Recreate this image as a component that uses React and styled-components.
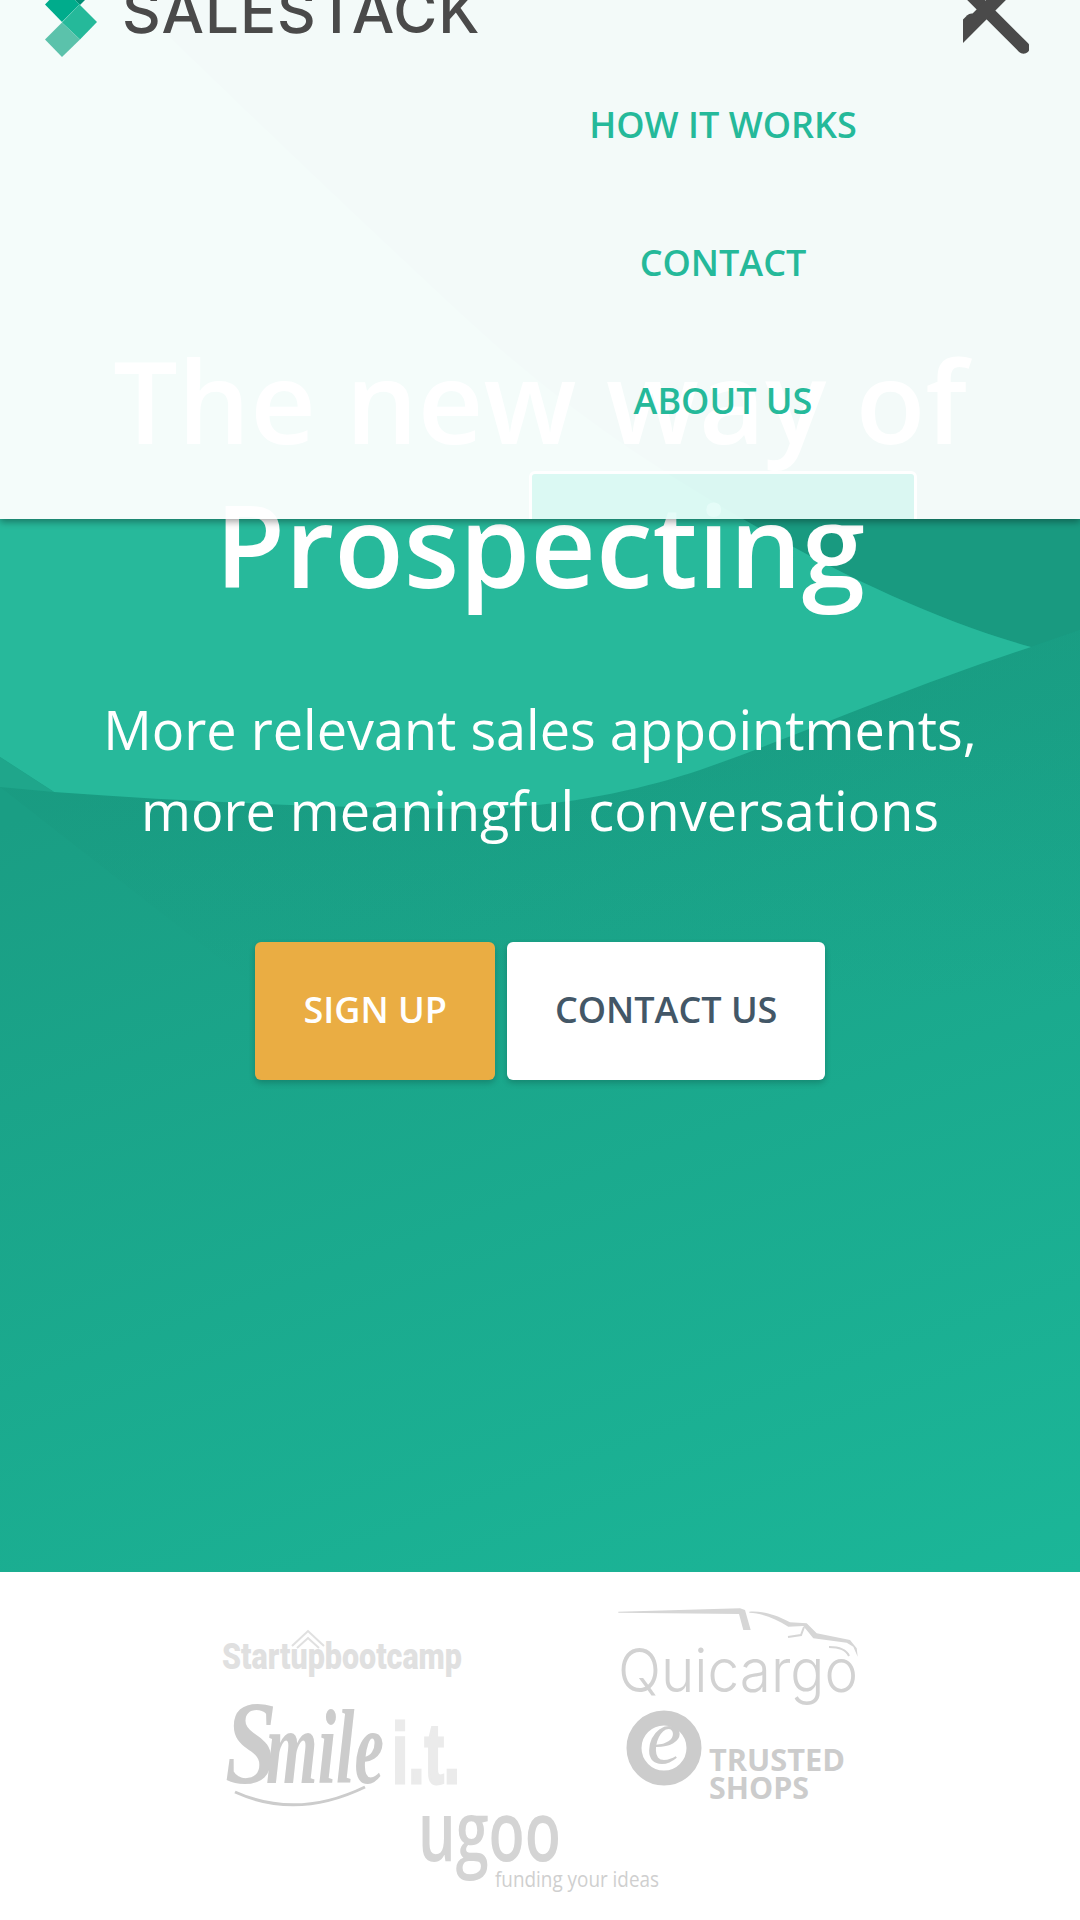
import React from 'react';
import styled, { createGlobalStyle } from 'styled-components';

const Global = createGlobalStyle`
  html, body { margin: 0; padding: 0; background: #fff; }
  body { font-family: "Open Sans", "Liberation Sans", sans-serif; width: 1080px; height: 1920px; overflow: hidden; }
`;

const Page = styled.div`
  position: relative;
  width: 1080px;
  height: 1920px;
  overflow: hidden;
`;

const Menu = styled.header`
  position: absolute;
  top: 0;
  left: 0;
  z-index: 5;
  width: 1080px;
  height: 519px;
  overflow: hidden;
  background: rgba(255, 255, 255, 0.95);
  box-shadow: 0 3px 7px rgba(0, 0, 0, 0.35);
`;

const TopBar = styled.div`
  display: flex;
  justify-content: space-between;
  height: 56px;
  padding: 0 51px 0 45px;
`;

const Brand = styled.div`
  display: flex;
  align-items: flex-start;
  gap: 25px;
`;

const BrandMark = styled.svg`
  display: block;
  width: 52px;
  height: 57px;
  overflow: visible;
  flex: none;
`;

const BrandName = styled.span`
  font-family: Inter, "Liberation Sans", sans-serif;
  font-size: 60px;
  font-weight: 500;
  line-height: 60px;
  letter-spacing: 1px;
  color: #4a4a4a;
  margin-top: -19px;
  white-space: nowrap;
`;

const CloseIcon = styled.svg`
  display: block;
  width: 66px;
  height: 55px;
  overflow: hidden;
  flex: none;
`;

const Nav = styled.nav`
  display: flex;
  flex-direction: column;
  width: 388px;
  margin-left: 529px;
`;

const NavLink = styled.a`
  display: block;
  height: 138px;
  font-size: 36px;
  font-weight: 600;
  line-height: 138px;
  color: #25b99a;
  text-align: center;
  white-space: nowrap;
`;

const NavButton = styled.div`
  box-sizing: border-box;
  height: 138px;
  margin-top: 1px;
  border: 3px solid #fff;
  border-radius: 6px;
  background: rgba(0, 230, 190, 0.1);
`;

const Hero = styled.section`
  position: relative;
  height: 1572px;
  overflow: hidden;
  background: linear-gradient(160deg, #1a9e84 42%, #1bb698 100%);
`;

const Waves = styled.svg`
  position: absolute;
  top: 0;
  left: 0;
  width: 1080px;
  height: 1572px;
`;

const HeroBody = styled.div`
  position: relative;
  display: flex;
  flex-direction: column;
  align-items: center;
  padding-top: 328px;
  color: #fff;
  text-align: center;
`;

const Title = styled.h1`
  margin: 0;
  font-size: 114px;
  font-weight: 600;
  line-height: 144px;
  white-space: nowrap;
`;

const Sub = styled.p`
  margin: 73px 0 0;
  font-size: 54px;
  font-weight: 400;
  line-height: 81px;
  white-space: nowrap;
`;

const Actions = styled.div`
  display: flex;
  gap: 12px;
  margin-top: 91px;
`;

const Action = styled.a`
  display: block;
  height: 138px;
  padding: 0 ${p => p.$pad}px;
  border-radius: 6px;
  background: ${p => p.$bg};
  color: ${p => p.$fg};
  font-size: 36px;
  font-weight: 600;
  line-height: 136px;
  box-shadow: 0 3px 6px rgba(0, 0, 0, 0.2);
  white-space: nowrap;
`;

const Partners = styled.section`
  display: grid;
  grid-template-columns: 240px 240px;
  grid-auto-rows: max-content;
  justify-content: center;
  column-gap: 156px;
  height: 348px;
  padding-top: 33px;
  box-sizing: border-box;
  background: #fff;
`;

const PartnerLogo = styled.svg`
  display: block;
  width: 240px;
  height: 100px;
  overflow: visible;
  font-family: "Open Sans", sans-serif;
`;

const Ugoo = styled(PartnerLogo)`
  grid-column: 1 / -1;
  justify-self: center;
  height: 80px;
  margin-top: 5px;
`;

export default function App() {
  return (
    <Page>
      <Global />
      <Hero>
        <Waves viewBox="0 0 1080 1572">
          <defs>
            <linearGradient id="band" x1="0" y1="700" x2="0" y2="1000" gradientUnits="userSpaceOnUse">
              <stop offset="0" stopColor="#158a72" stopOpacity="0.18" />
              <stop offset="1" stopColor="#158a72" stopOpacity="0" />
            </linearGradient>
          </defs>
          <path d="M0 787 L54 792 C200 800 400 806 482 803 C520 803 550 803 585 798 C680 780 800 720 1031 647 L1080 630 L1080 1000 L260 990 Z" fill="url(#band)" />
          <path d="M743 519 C840 575 940 622 1031 647 L1080 630 L1080 0 L130 0 L468 320 Z" fill="#199a80" />
          <path d="M0 0 L130 0 C170 35 258 125 468 320 C560 405 650 465 743 519 C840 575 940 622 1031 647 C900 690 800 735 700 770 C640 790 560 808 470 809 C350 808 200 803 54 792 L0 757 Z" fill="#27b99b" />
          <path d="M0 757 L54 792 L0 787 Z" fill="#1fa68b" />
        </Waves>
        <HeroBody>
          <Title>The new way of<br />Prospecting</Title>
          <Sub>More relevant sales appointments,<br />more meaningful conversations</Sub>
          <Actions>
            <Action $bg="#eaad43" $fg="#fff" $pad={48.5}>SIGN UP</Action>
            <Action $bg="#fff" $fg="#435767" $pad={47.5}>CONTACT US</Action>
          </Actions>
        </HeroBody>
      </Hero>

      <Menu>
        <TopBar>
          <Brand>
            <BrandMark viewBox="45 0 52 57">
              <polygon points="75,0 85,0 80,5" fill="#008d74" />
              <polygon points="45,4.5 62,-13 79.5,4.5 62,22" fill="#00ac8c" />
              <polygon points="62,22.5 79.5,4.5 97,22 80,39.5" fill="#25b99a" />
              <polygon points="45,39.5 62,22.5 80,39.5 62,57" fill="#5bc2ab" />
            </BrandMark>
            <BrandName>SALESTACK</BrandName>
          </Brand>
          <CloseIcon viewBox="0 0 66 55">
            <g stroke="#4a4a4a" fill="none" strokeLinecap="round">
              <line x1="-2" y1="-15" x2="60.5" y2="47.5" strokeWidth="12.5" />
              <line x1="-10" y1="43" x2="45" y2="-12" strokeWidth="14" />
              <line x1="-5" y1="33" x2="8.5" y2="19.5" strokeWidth="12" />
            </g>
          </CloseIcon>
        </TopBar>
        <Nav>
          <NavLink>HOW IT WORKS</NavLink>
          <NavLink>CONTACT</NavLink>
          <NavLink>ABOUT US</NavLink>
          <NavButton />
        </Nav>
      </Menu>

      <Partners>
        <PartnerLogo viewBox="222 1605 240 100">
          <text x="222" y="1669" fontFamily="Roboto, sans-serif" fontWeight="900" fontSize="37" fill="#e0e0e0" textLength="240" lengthAdjust="spacingAndGlyphs">Startupbootcamp</text>
          <path d="M292 1646 L308 1631 L324 1646 M297 1648 L308 1638 L319 1648" fill="none" stroke="#e0e0e0" strokeWidth="2" />
        </PartnerLogo>
        <PartnerLogo viewBox="618 1605 240 100">
          <path d="M618.3 1611.7 L740 1608.3 L745 1610 L750.7 1630 L743.3 1630 L739 1614 L618.3 1612.7 Z" fill="#d6d6d6" />
          <path d="M749.3 1611.7 C760 1611 773 1613 790 1622.3 L806.7 1623.3 L816.7 1633.3 L850 1640 L856.7 1648.3 L857.7 1656.7 L853.3 1646.7 L846.7 1642.7 L813.3 1638.3 L803.3 1626 L788.3 1626.7 C775 1618 762 1613.5 749.3 1612.7 Z" fill="#d6d6d6" />
          <path d="M788 1637 L801 1635 L804 1627 M829 1647 C838 1647 846 1649 849 1656" fill="none" stroke="#d6d6d6" strokeWidth="2" />
          <text x="618" y="1692" fontFamily="Inter, sans-serif" fontWeight="300" fontSize="60" fill="#d2d2d2" textLength="240" lengthAdjust="spacingAndGlyphs">Quicargo</text>
        </PartnerLogo>
        <PartnerLogo viewBox="222 1705 240 100">
          <text x="225" y="1783" fontFamily="'Liberation Serif', serif" fontStyle="italic" fontWeight="700" fontSize="118" fill="#cccccc" textLength="52" lengthAdjust="spacingAndGlyphs">S</text>
          <text x="266" y="1783" fontFamily="'Liberation Serif', serif" fontStyle="italic" fontWeight="700" fontSize="105" fill="#cccccc" textLength="118" lengthAdjust="spacingAndGlyphs">mile</text>
          <text x="392" y="1783" fontFamily="'Liberation Sans', sans-serif" fontWeight="700" fontSize="86" fill="#ebebeb" stroke="#ebebeb" strokeWidth="3" textLength="68" lengthAdjust="spacingAndGlyphs">i.t.</text>
          <path d="M235 1792 Q297 1820 365 1787" fill="none" stroke="#cccccc" strokeWidth="3" />
        </PartnerLogo>
        <PartnerLogo viewBox="618 1705 240 100">
          <circle cx="664" cy="1748" r="30" fill="none" stroke="#cccccc" strokeWidth="15" />
          <text x="664" y="1763" textAnchor="middle" fontFamily="'Liberation Serif', serif" fontStyle="italic" fontSize="78" fill="#cccccc">e</text>
          <text x="709" y="1771" fontWeight="700" fontSize="30" fill="#cccccc" textLength="136" lengthAdjust="spacingAndGlyphs">TRUSTED</text>
          <text x="709" y="1799" fontWeight="700" fontSize="30" fill="#cccccc" textLength="100" lengthAdjust="spacingAndGlyphs">SHOPS</text>
        </PartnerLogo>
        <Ugoo viewBox="420 1810 240 80">
          <text x="418" y="1861" fontWeight="600" fontSize="84" fill="#d4d4d4" textLength="143" lengthAdjust="spacingAndGlyphs">ugoo</text>
          <text x="495" y="1887" fontWeight="400" fontSize="22" fill="#cfcfcf" textLength="164" lengthAdjust="spacingAndGlyphs">funding your ideas</text>
        </Ugoo>
      </Partners>
    </Page>
  );
}
